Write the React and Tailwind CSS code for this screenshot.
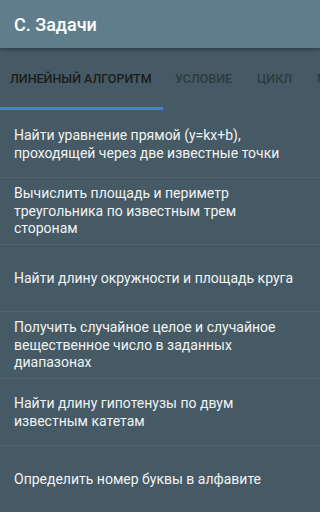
import React from "react";

const tasks = [
  "Найти уравнение прямой (y=kx+b), проходящей через две известные точки",
  "Вычислить площадь и периметр треугольника по известным трем сторонам",
  "Найти длину окружности и площадь круга",
  "Получить случайное целое и случайное вещественное число в заданных диапазонах",
  "Найти длину гипотенузы по двум известным катетам",
  "Определить номер буквы в алфавите",
];

const App = () => {
  return (
    <div className="w-[320px] h-[512px] overflow-hidden bg-[#455a64] font-['Roboto',sans-serif]">
      <div className="relative z-10 h-[48px] bg-[#607d8b] flex items-center px-[14px] shadow-[0_2px_3px_rgba(0,0,0,0.3)]">
        <h1 className="text-[18px] font-medium text-white">С. Задачи</h1>
      </div>
      <div className="h-[63px] flex flex-col">
        <div className="flex-1 flex items-center whitespace-nowrap text-[12.5px] font-medium">
          <div className="w-[163px] shrink-0 flex flex-col h-full">
            <div className="flex-1 flex items-center pl-[10px] pt-[3px] text-[#1c1c1c]">ЛИНЕЙНЫЙ АЛГОРИТМ</div>
            <div className="h-[3px] bg-[#4a7fd8] mb-[1px]" />
          </div>
          <div className="pl-[12px] w-[94px] shrink-0 text-[#2f3a40]">УСЛОВИЕ</div>
          <div className="w-[60px] shrink-0 text-[#2f3a40]">ЦИКЛ</div>
          <div className="shrink-0 text-[#2f3a40]">МАССИВ</div>
        </div>
      </div>
      <ul>
        {tasks.map((t, i) => (
          <li
            key={i}
            className="h-[67px] flex items-center pl-[14px] pr-[24px] pt-[1px] border-b border-[#52656f] text-[14px] leading-[17.5px] text-[#f1f3f4]"
          >
            {t}
          </li>
        ))}
      </ul>
    </div>
  );
};

export default App;
